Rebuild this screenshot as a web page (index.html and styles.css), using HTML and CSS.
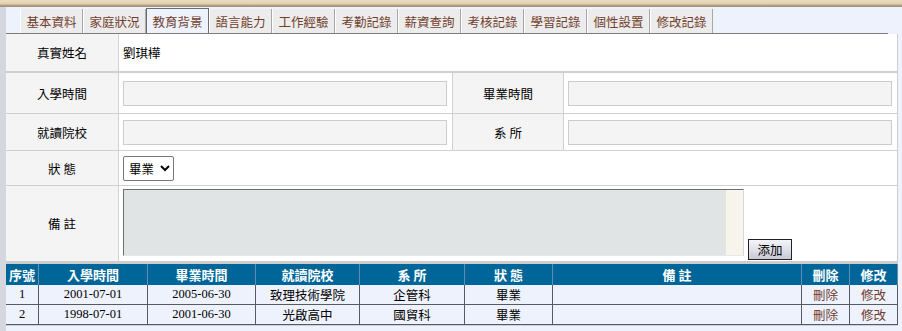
FILE: index.html
```html
<!DOCTYPE html>
<html lang="zh-Hant">
<head>
<meta charset="utf-8">
<title>教育背景</title>
<link rel="stylesheet" href="styles.css">
</head>
<body>
<div class="topbar"></div>
<div class="frame">
  <nav class="tabs">
    <a class="tab">基本資料</a>
    <a class="tab">家庭狀況</a>
    <a class="tab active">教育背景</a>
    <a class="tab">語言能力</a>
    <a class="tab">工作經驗</a>
    <a class="tab">考勤記錄</a>
    <a class="tab">薪資查詢</a>
    <a class="tab">考核記錄</a>
    <a class="tab">學習記錄</a>
    <a class="tab">個性設置</a>
    <a class="tab">修改記錄</a>
  </nav>
  <div class="panel">
    <div class="form">
      <div class="label r1">真實姓名</div>
      <div class="value span3 r1">劉琪樺</div>

      <div class="label">入學時間</div>
      <div class="value"><input class="field" type="text"></div>
      <div class="label">畢業時間</div>
      <div class="value"><input class="field" type="text"></div>

      <div class="label">就讀院校</div>
      <div class="value"><input class="field" type="text"></div>
      <div class="label">系 所</div>
      <div class="value"><input class="field" type="text"></div>

      <div class="label">狀 態</div>
      <div class="value span3"><select class="status"><option>畢業</option><option>肄業</option><option>在學</option></select></div>

      <div class="label">備 註</div>
      <div class="value span3 note-cell">
        <textarea class="note"></textarea>
        <button class="add" type="button">添加</button>
      </div>
    </div>
    <table class="list">
      <thead>
        <tr>
          <th class="w1">序號</th>
          <th class="w2">入學時間</th>
          <th class="w3">畢業時間</th>
          <th class="w4">就讀院校</th>
          <th class="w5">系 所</th>
          <th class="w6">狀 態</th>
          <th class="w7">備 註</th>
          <th class="w8">刪除</th>
          <th class="w9">修改</th>
        </tr>
      </thead>
      <tbody>
        <tr>
          <td class="num">1</td>
          <td class="num">2001-07-01</td>
          <td class="num">2005-06-30</td>
          <td>致理技術學院</td>
          <td>企管科</td>
          <td>畢業</td>
          <td></td>
          <td><a class="link">刪除</a></td>
          <td><a class="link">修改</a></td>
        </tr>
        <tr>
          <td class="num">2</td>
          <td class="num">1998-07-01</td>
          <td class="num">2001-06-30</td>
          <td>光啟高中</td>
          <td>國貿科</td>
          <td>畢業</td>
          <td></td>
          <td><a class="link">刪除</a></td>
          <td><a class="link">修改</a></td>
        </tr>
      </tbody>
    </table>
  </div>
</div>
</body>
</html>
```

FILE: styles.css
```css
* { box-sizing: border-box; }
html, body { margin: 0; padding: 0; }
body {
  width: 902px;
  height: 331px;
  overflow: hidden;
  background: #eef2fc;
  font-family: "Noto Sans CJK TC", "Noto Sans CJK SC", sans-serif;
  font-size: 13px;
  color: #000;
}
.topbar {
  height: 7px;
  background: linear-gradient(to bottom, #ecdcbd 0, #e2d1b0 4px, #b3a388 5px, #9f8f77 7px);
}
.frame {
  display: flex;
  flex-direction: column;
  height: 324px;
  border-left: 6px solid #d6d6de;
}
.tabs {
  display: flex;
  align-items: flex-end;
  height: 27px;
  width: 882px;
  padding-left: 14px;
  border-bottom: 1px solid #7c7c7c;
}
.tab {
  width: 63px;
  height: 24px;
  display: flex;
  align-items: center;
  justify-content: center;
  background: #ececec;
  color: #713f2d;
  border-left: 1px solid #fdfdfd;
  border-right: 1px solid #a8a8a8;
  font-size: 12.5px;
  white-space: nowrap;
  cursor: pointer;
}
.tab.active {
  height: 25px;
  background: #eef2fc;
  border: 1px solid #6c6c6c;
  border-bottom: none;
}
.panel {
  width: 892px;
  background: #fff;
}
.form {
  display: grid;
  grid-template-columns: 112px 333px 110px 333px;
  grid-template-rows: 38px 40px 36px 34px 75px;
  column-gap: 1px;
  row-gap: 1px;
  background: #d0d0d0;
  border-right: 1px solid #cccccc;
  border-bottom: 3px solid #cdcdcd;
}
.label {
  background: #f4f4f4;
  display: flex;
  align-items: center;
  justify-content: center;
  font-size: 12.5px;
  white-space: pre;
}
.value {
  background: #fff;
  display: flex;
  align-items: center;
  padding-left: 4px;
  font-size: 12.5px;
}
.r1 { margin-bottom: 1px; }
.span3 { grid-column: 2 / 5; }
.field {
  width: 324px;
  height: 25px;
  margin: 0;
  background: #f4f4f4;
  border: 1px solid #cccccc;
  outline: none;
}
.status {
  width: 51px;
  height: 25px;
  margin: 0;
  padding: 0 0 0 1px;
  font-family: "Noto Sans CJK TC", sans-serif;
  font-size: 12.5px;
  color: #000;
  background: #fff;
  border: 1px solid #767676;
  border-radius: 2px;
}
.note-cell {
  align-items: flex-start;
  gap: 4px;
}
.note {
  width: 621px;
  height: 67px;
  margin: 3px 0 0 0;
  padding: 0;
  resize: none;
  background: #e0e4e5;
  border-top: 1px solid #6e6e6e;
  border-left: 1px solid #6e6e6e;
  border-right: 1px solid #d8d8d8;
  border-bottom: 1px solid #e8e8e8;
  box-shadow: inset -17px 0 0 #f7f5eb;
  outline: none;
}
.add {
  width: 44px;
  height: 21px;
  margin: 53px 0 0 0;
  padding: 0;
  font-family: "Noto Sans CJK TC", sans-serif;
  font-size: 12.5px;
  color: #000;
  border: 1px solid #222;
  background: linear-gradient(to bottom, #f4f4fa, #dcdce8 60%, #c8c8d6);
}
.list {
  width: 892px;
  table-layout: fixed;
  border-collapse: separate;
  border-spacing: 0;
  background: #eef2fd;
  border-bottom: 1px solid #cfd0d8;
}
.list th {
  height: 21px;
  padding: 0;
  background: #006699;
  color: #fff;
  font-weight: bold;
  font-size: 13px;
  text-align: center;
  border-right: 1px solid #5f8fad;
  white-space: pre;
}
.list td {
  height: 20px;
  padding: 0;
  text-align: center;
  font-size: 12.5px;
  border-right: 1px solid #555a66;
  border-bottom: 1px solid #555a66;
}
.list td.num {
  font-family: "Liberation Serif", serif;
  font-size: 12.5px;
}
.w1 { width: 33px; }
.w2 { width: 109px; }
.w3 { width: 108px; }
.w4 { width: 104px; }
.w5 { width: 105px; }
.w6 { width: 88px; }
.w7 { width: 249px; }
.w8 { width: 48px; }
.w9 { width: 48px; }
.link {
  color: #6e3d2d;
  text-decoration: none;
  cursor: pointer;
}
```
